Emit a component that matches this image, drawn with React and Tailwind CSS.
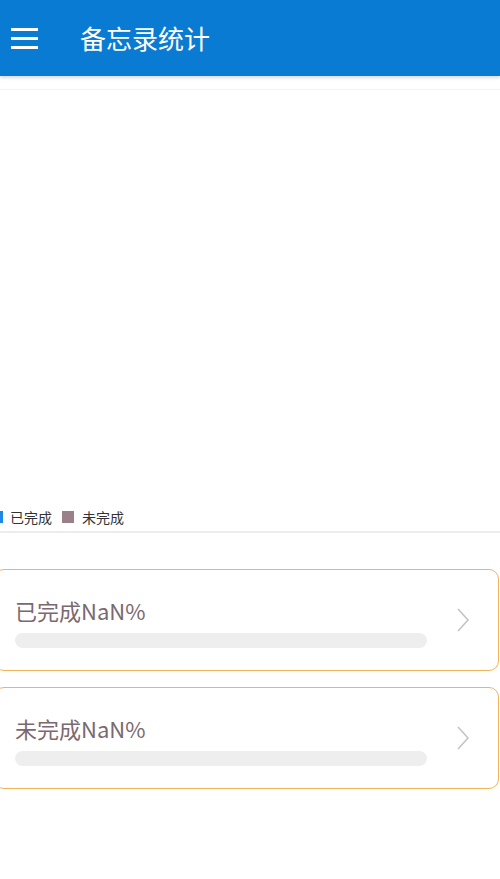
import React from 'react';

const font = { fontFamily: '"Noto Sans CJK SC", Roboto, sans-serif' };

const StatCard = ({ label }) => (
  <div className="flex items-center -ml-[6px] mr-px h-[102px] rounded-[10px] border-[1.5px] border-[#f0b45a] bg-white pl-[20px] pr-[28px] pt-[3px]">
    <div className="flex-1">
      <div className="text-[22px] leading-[30px] text-[#7a6970]">{label}NaN%</div>
      <div className="mt-[8px] h-[15px] w-[412px] rounded-full bg-[#eeeeee]"></div>
    </div>
    <svg width="14" height="26" viewBox="0 0 14 26" className="mt-[-4px]">
      <path d="M2 2 L12 13 L2 24" fill="none" stroke="#c4c4c4" strokeWidth="1.6" />
    </svg>
  </div>
);

export default function App() {
  return (
    <div className="min-h-[879px] w-[500px] bg-white overflow-hidden" style={font}>
      {/* header */}
      <div className="flex h-[76px] items-center bg-[#0a7bd2] shadow-[0_2px_3px_rgba(0,0,0,0.15)]">
        <div className="ml-[11px] flex w-[27px] flex-col gap-[6px]">
          <span className="block h-[3px] bg-white"></span>
          <span className="block h-[3px] bg-white"></span>
          <span className="block h-[3px] bg-white"></span>
        </div>
        <h1 className="ml-[42px] text-[26px] leading-none text-white">备忘录统计</h1>
      </div>

      {/* chart area */}
      <div className="mt-[13px] h-[417px] border-t border-[#f3f3f3]"></div>

      {/* legend */}
      <div className="flex h-[22px] items-center text-[14px] text-[#333333]">
        <span className="-ml-[9px] block h-[12px] w-[12px] bg-[#1e88e5]"></span>
        <span className="ml-[7px]">已完成</span>
        <span className="ml-[10px] block h-[12px] w-[12px] bg-[#9a8088]"></span>
        <span className="ml-[8px]">未完成</span>
      </div>
      <div className="mt-[3px] h-[2px] bg-[#ececec]"></div>

      {/* cards */}
      <div className="mt-[36px] flex flex-col gap-[16px]">
        <StatCard label="已完成" />
        <StatCard label="未完成" />
      </div>
    </div>
  );
}
